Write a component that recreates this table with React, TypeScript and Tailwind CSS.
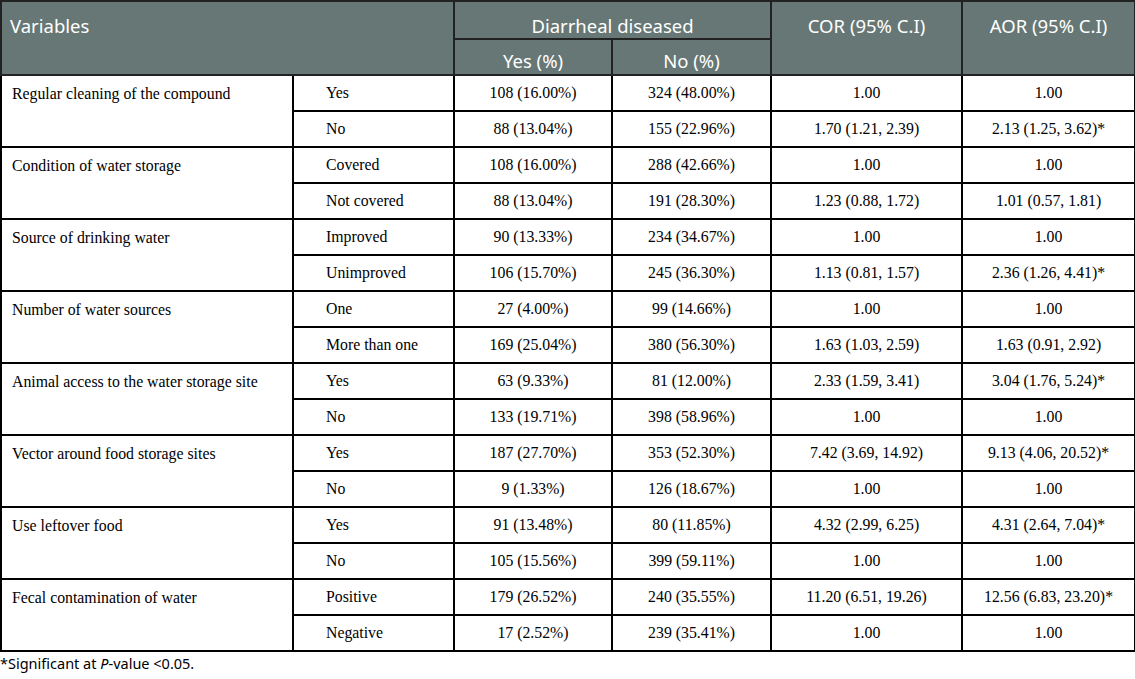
import React from "react";

type Row = { v: string; rows: [string, string, string, string, string][] };

const data: Row[] = [
  { v: "Regular cleaning of the compound", rows: [["Yes", "108 (16.00%)", "324 (48.00%)", "1.00", "1.00"], ["No", "88 (13.04%)", "155 (22.96%)", "1.70 (1.21, 2.39)", "2.13 (1.25, 3.62)*"]] },
  { v: "Condition of water storage", rows: [["Covered", "108 (16.00%)", "288 (42.66%)", "1.00", "1.00"], ["Not covered", "88 (13.04%)", "191 (28.30%)", "1.23 (0.88, 1.72)", "1.01 (0.57, 1.81)"]] },
  { v: "Source of drinking water", rows: [["Improved", "90 (13.33%)", "234 (34.67%)", "1.00", "1.00"], ["Unimproved", "106 (15.70%)", "245 (36.30%)", "1.13 (0.81, 1.57)", "2.36 (1.26, 4.41)*"]] },
  { v: "Number of water sources", rows: [["One", "27 (4.00%)", "99 (14.66%)", "1.00", "1.00"], ["More than one", "169 (25.04%)", "380 (56.30%)", "1.63 (1.03, 2.59)", "1.63 (0.91, 2.92)"]] },
  { v: "Animal access to the water storage site", rows: [["Yes", "63 (9.33%)", "81 (12.00%)", "2.33 (1.59, 3.41)", "3.04 (1.76, 5.24)*"], ["No", "133 (19.71%)", "398 (58.96%)", "1.00", "1.00"]] },
  { v: "Vector around food storage sites", rows: [["Yes", "187 (27.70%)", "353 (52.30%)", "7.42 (3.69, 14.92)", "9.13 (4.06, 20.52)*"], ["No", "9 (1.33%)", "126 (18.67%)", "1.00", "1.00"]] },
  { v: "Use leftover food", rows: [["Yes", "91 (13.48%)", "80 (11.85%)", "4.32 (2.99, 6.25)", "4.31 (2.64, 7.04)*"], ["No", "105 (15.56%)", "399 (59.11%)", "1.00", "1.00"]] },
  { v: "Fecal contamination of water", rows: [["Positive", "179 (26.52%)", "240 (35.55%)", "11.20 (6.51, 19.26)", "12.56 (6.83, 23.20)*"], ["Negative", "17 (2.52%)", "239 (35.41%)", "1.00", "1.00"]] },
];

const serif = { fontFamily: '"Liberation Serif", "DejaVu Serif", serif' };
const sans = { fontFamily: '"Noto Sans", "Open Sans", sans-serif' };

export default function App() {
  return (
    <div className="w-[1135px] h-[679px] bg-white">
      <table className="border-collapse table-fixed w-[1134px]">
        <colgroup>
          <col className="w-[292px]" />
          <col className="w-[161px]" />
          <col className="w-[158px]" />
          <col className="w-[159px]" />
          <col className="w-[191px]" />
          <col className="w-[173px]" />
        </colgroup>
        <thead style={sans} className="text-white text-[18.5px] leading-[24px] font-normal bg-[#667775]">
          <tr className="h-[38px]">
            <th colSpan={2} rowSpan={2} className="border-2 border-[#222] align-top text-left font-normal pl-[8px] pt-[12px]">Variables</th>
            <th colSpan={2} className="border-2 border-[#222] font-normal align-top pt-[12px]">Diarrheal diseased</th>
            <th rowSpan={2} className="border-2 border-[#222] font-normal align-top pt-[12px]">COR (95% C.I)</th>
            <th rowSpan={2} className="border-2 border-[#222] font-normal align-top pt-[12px]">AOR (95% C.I)</th>
          </tr>
          <tr className="h-[36px]">
            <th className="border-2 border-[#222] font-normal pt-[8px]">Yes (%)</th>
            <th className="border-2 border-[#222] font-normal pt-[8px]">No (%)</th>
          </tr>
        </thead>
        <tbody style={serif} className="text-[15.8px] text-black">
          {data.map((g) =>
            g.rows.map((r, i) => (
              <tr key={g.v + i} className="h-[36px]">
                {i === 0 && (
                  <td rowSpan={2} className="border-2 border-black align-top pl-[10px] pt-[6px]">{g.v}</td>
                )}
                <td className="border-2 border-black pl-[32px]">{r[0]}</td>
                <td className="border-2 border-black text-center">{r[1]}</td>
                <td className="border-2 border-black text-center">{r[2]}</td>
                <td className="border-2 border-black text-center">{r[3]}</td>
                <td className="border-2 border-black text-center">{r[4]}</td>
              </tr>
            ))
          )}
        </tbody>
      </table>
      <div style={sans} className="text-[14.5px] text-black mt-[1px] leading-[20px]">
        *Significant at <span className="italic">P</span>-value &lt;0.05.
      </div>
    </div>
  );
}
